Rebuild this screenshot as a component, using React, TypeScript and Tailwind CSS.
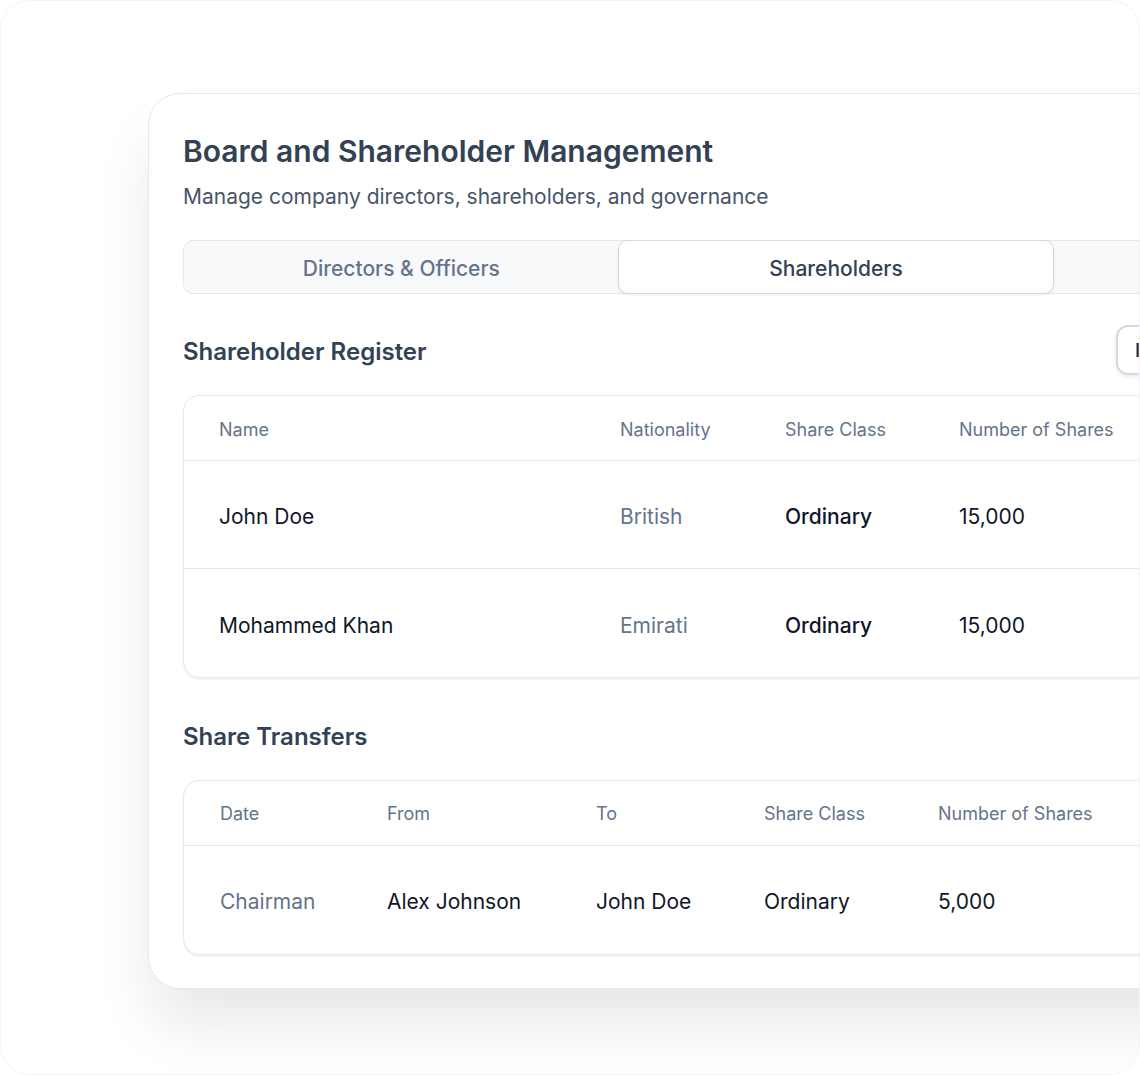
const registerRows = [
  { name: 'John Doe', nationality: 'British', shareClass: 'Ordinary', shares: '15,000' },
  { name: 'Mohammed Khan', nationality: 'Emirati', shareClass: 'Ordinary', shares: '15,000' },
]

const transferRows = [
  { date: 'Chairman', from: 'Alex Johnson', to: 'John Doe', shareClass: 'Ordinary', shares: '5,000' },
]

function SectionHeader({ title, action }: { title: string; action?: string }) {
  return (
    <div className="flex h-[50px] items-center">
      <h2 className="w-[933px] shrink-0 pt-[3px] text-[24px] font-semibold leading-[32px] text-[#334155]">{title}</h2>
      {action && (
        <button className="flex h-[50px] shrink-0 items-center rounded-[12px] border-2 border-[#d5d8de] bg-white pl-[17px] pr-5 pt-[2px] text-[19px] font-medium text-[#1e293b] shadow-[0_2px_4px_rgba(15,23,42,0.08)]">
          {action}
        </button>
      )}
    </div>
  )
}

export default function App() {
  return (
    <div className="h-[1075px] w-[1140px] bg-white" style={{ fontFamily: 'Inter, "Noto Sans", sans-serif' }}>
      <div className="relative h-full w-full overflow-hidden rounded-[30px] border border-[#f3f4f6] bg-white">
        <div className="pl-[147px] pt-[92px]">
          <div className="w-[1376px] rounded-[32px] border border-[#e5e7eb] bg-white px-[34px] pb-[33px] pt-[38px] shadow-[0_40px_60px_-6px_rgba(15,23,42,0.1)]">
            <h1 className="text-[30px] font-semibold leading-[38px] text-[#334155]">
              Board and Shareholder Management
            </h1>
            <p className="mt-[13px] text-[21px] leading-[28px] text-[#475569]">
              Manage company directors, shareholders, and governance
            </p>

            <div className="mt-[29px] grid h-[54px] grid-cols-3 rounded-[10px] border border-[#e5e7eb] bg-[#f8f9fb]">
              <div className="flex items-center justify-center pt-[3px] text-[21px] font-medium text-[#64748b]">
                Directors &amp; Officers
              </div>
              <div className="-m-px flex items-center justify-center rounded-[10px] border border-[#d6d9e0] bg-white pt-[3px] text-[21px] font-medium text-[#334155] shadow-[0_1px_3px_rgba(15,23,42,0.08)]">
                Shareholders
              </div>
              <div className="flex items-center justify-center pt-[3px] text-[21px] font-medium text-[#64748b]">
                Meetings &amp; Resolutions
              </div>
            </div>

            <div className="mt-[31px]">
              <SectionHeader title="Shareholder Register" action="Issue Shares" />
              <div className="mt-[20px] overflow-hidden rounded-[16px] border border-[#e5e7eb] shadow-[0_2px_1px_rgba(15,23,42,0.05)]">
                <div className="grid h-[65px] grid-cols-[436px_165px_174px_1fr] items-center border-b border-[#e5e7eb] pt-[2px] text-[18px] text-[#64748b]">
                  <div className="pl-[35px]">Name</div>
                  <div>Nationality</div>
                  <div>Share Class</div>
                  <div>Number of Shares</div>
                </div>
                {registerRows.map((row, i) => (
                  <div
                    key={row.name}
                    className={`grid h-[108px] grid-cols-[436px_165px_174px_1fr] items-center pt-[5px] text-[21px] ${
                      i < registerRows.length - 1 ? 'border-b border-[#e5e7eb]' : ''
                    }`}
                  >
                    <div className="pl-[35px] text-[#0f172a]">{row.name}</div>
                    <div className="text-[#64748b]">{row.nationality}</div>
                    <div className="font-medium text-[#0f172a]">{row.shareClass}</div>
                    <div className="text-[#0f172a]">{row.shares}</div>
                  </div>
                ))}
              </div>
            </div>

            <div className="mt-[32px]">
              <SectionHeader title="Share Transfers" />
              <div className="mt-[20px] overflow-hidden rounded-[16px] border border-[#e5e7eb] shadow-[0_2px_1px_rgba(15,23,42,0.05)]">
                <div className="grid h-[65px] grid-cols-[203px_209px_168px_174px_1fr] items-center border-b border-[#e5e7eb] text-[18px] text-[#64748b]">
                  <div className="pl-[36px]">Date</div>
                  <div>From</div>
                  <div>To</div>
                  <div>Share Class</div>
                  <div>Number of Shares</div>
                </div>
                {transferRows.map((row) => (
                  <div
                    key={row.from}
                    className="grid h-[108px] grid-cols-[203px_209px_168px_174px_1fr] items-center pt-[4px] text-[21px] text-[#0f172a]"
                  >
                    <div className="pl-[36px] text-[#64748b]">{row.date}</div>
                    <div>{row.from}</div>
                    <div>{row.to}</div>
                    <div>{row.shareClass}</div>
                    <div>{row.shares}</div>
                  </div>
                ))}
              </div>
            </div>
          </div>
        </div>
      </div>
    </div>
  )
}
